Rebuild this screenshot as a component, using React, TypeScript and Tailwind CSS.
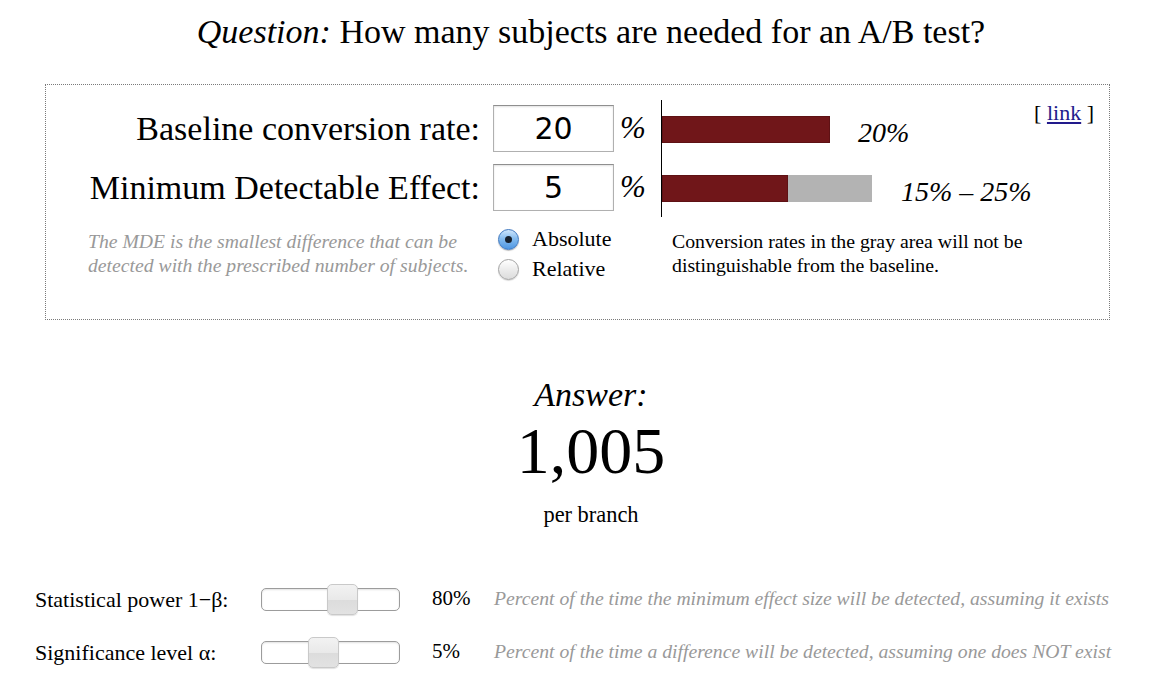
import React from "react";

const serif = "font-['Liberation_Serif','Times_New_Roman',serif]";

function Radio({ checked, label }: { checked: boolean; label: string }) {
  return (
    <div className="flex items-center h-[30px]">
      {checked ? (
        <div className="w-[21px] h-[21px] rounded-full border border-[#3f78c0] bg-[linear-gradient(to_bottom,#cfe6fc,#86bcef_45%,#4f97e2)] shadow-[0_1px_1px_rgba(0,0,0,0.25)] flex items-center justify-center">
          <div className="w-[7px] h-[7px] rounded-full bg-[#17202c]" />
        </div>
      ) : (
        <div className="w-[21px] h-[21px] rounded-full border border-[#a3a3a3] bg-[linear-gradient(to_bottom,#ffffff,#ececec_50%,#dcdcdc)] shadow-[0_1px_1px_rgba(0,0,0,0.15)]" />
      )}
      <span className="ml-[13px] text-[22px] leading-[26px] text-black">{label}</span>
    </div>
  );
}

function Slider({ offset }: { offset: number }) {
  return (
    <div className="relative w-[139px] h-[23px] rounded-[5px] border border-[#9c9c9c] bg-white shadow-[inset_0_1px_2px_rgba(0,0,0,0.12)]">
      <div
        className="absolute top-[-5px] w-[31px] h-[31px] rounded-[5px] border border-[#c9c9c9] bg-[linear-gradient(to_bottom,#f2f2f2,#e9e9e9_50%,#dcdcdc_52%,#e2e2e2)] shadow-[0_1px_1px_rgba(0,0,0,0.12)]"
        style={{ left: offset }}
      />
    </div>
  );
}

function InputBox({ value }: { value: string }) {
  return (
    <div className="ml-[13px] w-[121px] h-[47px] border border-[#b0b0b0] border-t-[#8f8f8f] bg-white shadow-[inset_0_1px_2px_rgba(0,0,0,0.12)] flex items-center justify-center font-['DejaVu_Sans',sans-serif] text-[30px] text-black">
      {value}
    </div>
  );
}

export default function App() {
  return (
    <div className={`w-[1152px] h-[682px] bg-white text-black overflow-hidden ${serif}`}>
      <div className="pt-[14px] pl-[30px] text-center text-[34px] leading-[36px]">
        <i>Question:</i> How many subjects are needed for an A/B test?
      </div>

      <div className="mt-[34px] ml-[45px] w-[1065px] h-[236px] border border-dotted border-[#7a7a7a]">
        <div className="flex pt-[15px]">
          <div className="flex flex-col gap-[12px] mt-[5px]">
            <div className="flex items-center h-[47px]">
              <div className="w-[434px] text-right text-[34px] leading-[40px]">Baseline conversion rate:</div>
              <InputBox value="20" />
              <span className="ml-[6px] w-[25px] italic text-[31px]">%</span>
            </div>
            <div className="flex items-center h-[47px]">
              <div className="w-[434px] text-right text-[34px] leading-[40px]">Minimum Detectable Effect:</div>
              <InputBox value="5" />
              <span className="ml-[6px] w-[25px] italic text-[31px]">%</span>
            </div>
          </div>
          <div className="ml-[16px] h-[117px] border-l border-black flex flex-col gap-[32px] pt-[16px]">
            <div className="flex items-center h-[27px]">
              <div className="w-[168px] h-[27px] bg-[#701619] border border-[#5e1114]" />
              <span className="ml-[28px] italic text-[28px] leading-[28px] mt-[6px]">20%</span>
            </div>
            <div className="flex items-center h-[27px]">
              <div className="w-[126px] h-[27px] bg-[#701619] border border-[#5e1114]" />
              <div className="w-[84px] h-[27px] bg-[#b3b3b3]" />
              <span className="ml-[29px] italic text-[28px] leading-[28px] mt-[6px]">15% – 25%</span>
            </div>
          </div>
          <div className="ml-auto mr-[15px] mt-[1px] text-[22px] leading-[24px] h-[24px]">
            [ <span className="underline text-[#221a8c]">link</span> ]
          </div>
        </div>

        <div className="flex mt-[7px]">
          <div className="ml-[42px] w-[410px] pt-[5px] italic text-[19.7px] leading-[24px] text-[#999999]">
            The MDE is the smallest difference that can be
            <br />
            detected with the prescribed number of subjects.
          </div>
          <div className="w-[174px] flex flex-col">
            <Radio checked label="Absolute" />
            <Radio checked={false} label="Relative" />
          </div>
          <div className="pt-[5px] text-[19.8px] leading-[24px]">
            Conversion rates in the gray area will not be
            <br />
            distinguishable from the baseline.
          </div>
        </div>
      </div>

      <div className="flex flex-col items-center pl-[30px]">
        <div className="mt-[57px] italic text-[34px] leading-[36px]">Answer:</div>
        <div className="mt-[6px] text-[66px] leading-[64px]">1,005</div>
        <div className="mt-[19px] text-[22.4px] leading-[26px]">per branch</div>
      </div>

      <div className="mt-[54px] flex flex-col gap-[19px]">
        <div className="flex items-center h-[34px] pl-[35px]">
          <div className="w-[226px] text-[22px]">Statistical power 1−β:</div>
          <Slider offset={65} />
          <div className="ml-[32px] w-[62px] text-[21px]">80%</div>
          <div className="italic text-[19.7px] text-[#999999] whitespace-nowrap">
            Percent of the time the minimum effect size will be detected, assuming it exists
          </div>
        </div>
        <div className="flex items-center h-[34px] pl-[35px]">
          <div className="w-[226px] text-[22px]">Significance level α:</div>
          <Slider offset={46} />
          <div className="ml-[32px] w-[62px] text-[21px]">5%</div>
          <div className="italic text-[19.7px] text-[#999999] whitespace-nowrap">
            Percent of the time a difference will be detected, assuming one does NOT exist
          </div>
        </div>
      </div>
    </div>
  );
}
